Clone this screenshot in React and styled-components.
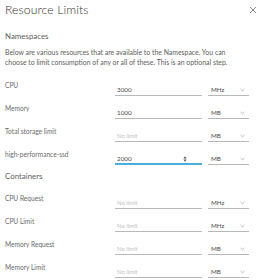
import React from 'react'
import styled, { createGlobalStyle } from 'styled-components'

const GlobalStyle = createGlobalStyle`
  body {
    margin: 0;
    background: #fff;
    font-family: Lato, 'Liberation Sans', sans-serif;
  }
`

const Dialog = styled.div`
  width: 260px;
  height: 280px;
  box-sizing: border-box;
  padding: 0 11px 0 5px;
  overflow: hidden;
`

const Header = styled.div`
  display: flex;
  align-items: center;
  justify-content: space-between;
  height: 19px;
`

const Title = styled.h1`
  margin: 0;
  font-size: 12.2px;
  font-weight: 300;
  color: #313131;
  letter-spacing: 0.1px;
`

const Close = styled.span`
  display: block;
  width: 8px;
  height: 8px;
  margin-right: -8px;
  line-height: 0;
  color: #7a7a7a;
`

const SectionTitle = styled.h2`
  margin: ${p => p.$top}px 0 0;
  font-size: 7.9px;
  line-height: 10px;
  font-weight: 400;
  color: #5e5e5e;
`

const Description = styled.p`
  margin: 6px 0 13px;
  font-size: 6.9px;
  line-height: 10px;
  color: #5e5e5e;
  white-space: nowrap;
`

const Fields = styled.div`
  display: flex;
  flex-direction: column;
  gap: 7px;
  margin: ${p => p.$top}px 0 ${p => p.$bottom}px;
`

const Row = styled.div`
  display: grid;
  grid-template-columns: 110px 87px 41px;
  column-gap: 0;
  height: 16px;
  & > :last-child {
    margin-left: 6px;
  }
`

const Label = styled.label`
  font-size: 6.6px;
  line-height: 10px;
  color: #6a6a6a;
  white-space: nowrap;
`

const Field = styled.div`
  position: relative;
  display: flex;
  align-items: center;
  box-sizing: border-box;
  margin-top: 4px;
  height: 12px;
  padding: 0 2px;
  border-bottom: ${p => (p.$focused ? '2px solid #49afd9' : '1px solid #b8b8b8')};
  font-size: ${p => (p.$empty ? '5.9px' : '6.3px')};
  color: ${p => (p.$empty ? '#c2c2c2' : '#4a4a4a')};
`

const SelectBox = styled(Field)`
  width: 41px;
  justify-content: space-between;
  padding: 0 4px 0 3px;
  font-size: 6.3px;
  color: #4a4a4a;
`

const Spinner = styled.svg`
  position: absolute;
  right: 15px;
  top: 3px;
`

const Chevron = () => (
  <svg width="5" height="4" viewBox="0 0 5 4">
    <polyline points="0.6,1 2.5,2.8 4.4,1" fill="none" stroke="#9a9a9a" strokeWidth="0.7" />
  </svg>
)

const ResourceRow = ({ label, value, unit, focused }) => (
  <Row>
    <Label>{label}</Label>
    <Field $focused={focused} $empty={!value}>
      {value || 'No limit'}
      {focused && (
        <Spinner width="4" height="6" viewBox="0 0 4 6">
          <polygon points="2,0.3 3.6,2.4 0.4,2.4" fill="#555" />
          <polygon points="2,5.7 3.6,3.6 0.4,3.6" fill="#555" />
        </Spinner>
      )}
    </Field>
    <SelectBox>
      <span>{unit}</span>
      <Chevron />
    </SelectBox>
  </Row>
)

const namespaceLimits = [
  { label: 'CPU', value: '3000', unit: 'MHz' },
  { label: 'Memory', value: '1000', unit: 'MB' },
  { label: 'Total storage limit', value: '', unit: 'MB' },
  { label: 'high-performance-ssd', value: '2000', unit: 'MB', focused: true },
]

const containerLimits = [
  { label: 'CPU Request', unit: 'MHz' },
  { label: 'CPU Limit', unit: 'MHz' },
  { label: 'Memory Request', unit: 'MB' },
  { label: 'Memory Limit', unit: 'MB' },
]

export default function App() {
  return (
    <>
      <GlobalStyle />
      <Dialog>
        <Header>
          <Title>Resource Limits</Title>
          <Close aria-label="Close">
            <svg width="8" height="8" viewBox="0 0 8 8">
              <line x1="1" y1="1" x2="7" y2="7" stroke="currentColor" strokeWidth="0.9" />
              <line x1="7" y1="1" x2="1" y2="7" stroke="currentColor" strokeWidth="0.9" />
            </svg>
          </Close>
        </Header>
        <SectionTitle $top={12}>Namespaces</SectionTitle>
        <Description>
          Below are various resources that are available to the Namespace. You can
          <br />
          choose to limit consumption of any or all of these. This is an optional step.
        </Description>
        <Fields $top={0} $bottom={6}>
          {namespaceLimits.map(item => (
            <ResourceRow key={item.label} {...item} />
          ))}
        </Fields>
        <SectionTitle $top={0}>Containers</SectionTitle>
        <Fields $top={12} $bottom={0}>
          {containerLimits.map(item => (
            <ResourceRow key={item.label} {...item} />
          ))}
        </Fields>
      </Dialog>
    </>
  )
}
